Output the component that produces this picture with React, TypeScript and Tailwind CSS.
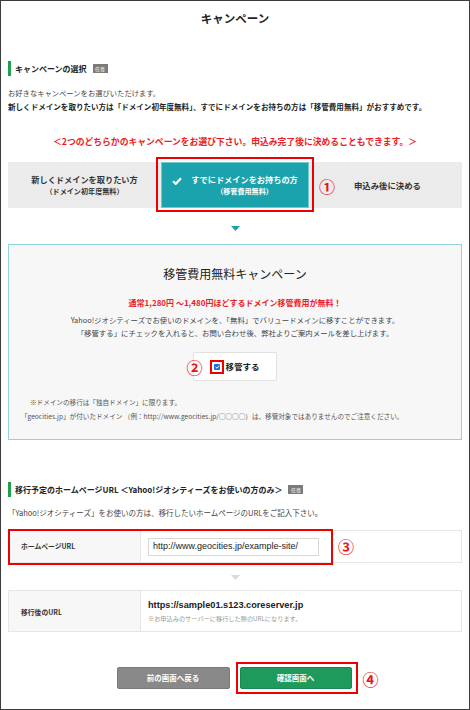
const jp = "font-['Noto_Sans_CJK_JP','Noto_Sans',sans-serif]";

function Badge() {
  return (
    <span className="ml-[6px] inline-flex h-[9px] w-[15px] items-center justify-center bg-[#7b7b7b] text-[5px] leading-none text-white">
      任意
    </span>
  );
}

function Heading({ children }: { children: React.ReactNode }) {
  return (
    <div className="flex h-[15px] items-center border-l-[3px] border-[#21a04a] pl-[4px]">
      <span className="text-[8px] font-bold leading-none text-[#222]">{children}</span>
      <Badge />
    </div>
  );
}

function Circled({ n, className }: { n: string; className: string }) {
  return (
    <span className={`absolute text-[16px] font-bold leading-none text-[#e8141b] ${className}`}>{n}</span>
  );
}

function Triangle({ color }: { color: string }) {
  return (
    <div className="flex justify-center">
      <svg width="9" height="5" viewBox="0 0 9 5">
        <path d="M0 0 H9 L4.5 5 Z" fill={color} />
      </svg>
    </div>
  );
}

export default function App() {
  return (
    <div className={`${jp} h-[710px] w-[470px] overflow-hidden border border-[#3c3c3c] bg-white px-[7px] text-[#333]`}>
      {/* ページタイトル */}
      <h1 className="pt-[8px] text-center text-[11.5px] font-bold leading-[18px] text-[#222]">キャンペーン</h1>

      <div className="mt-[34px]">
        <Heading>キャンペーンの選択</Heading>
      </div>

      <div className="mt-[10px] leading-[14px]">
        <p className="text-[7.3px] text-[#444]">お好きなキャンペーンをお選びいただけます。</p>
        <p className="text-[7.55px] font-bold text-[#222]">
          新しくドメインを取りたい方は「ドメイン初年度無料」、すでにドメインをお持ちの方は「移管費用無料」がおすすめです。
        </p>
      </div>

      <p className="mt-[21px] text-center text-[8.8px] font-bold leading-[14px] text-[#ee1c24]">
        ＜2つのどちらかのキャンペーンをお選び下さい。申込み完了後に決めることもできます。＞
      </p>

      {/* キャンペーン選択タブ */}
      <div className="mt-[13px] grid h-[46px] grid-cols-[153px_148px_1fr] bg-[#ebebeb]">
        <div className="flex flex-col items-center justify-center gap-[1px] text-[#333]">
          <span className="text-[8.2px] font-bold leading-[11px]">新しくドメインを取りたい方</span>
          <span className="text-[7.1px] font-bold leading-[10px]">（ドメイン初年度無料）</span>
        </div>
        <div className="relative">
          <div className="flex h-full items-center justify-center gap-[9px] border border-[#74c9ce] bg-[#1aa3ac] text-white">
            <svg width="10" height="8" viewBox="0 0 10 8" className="mt-[-8px]">
              <path d="M1 4.2 L3.8 6.8 L9 1.2" fill="none" stroke="white" strokeWidth="2.2" />
            </svg>
            <div className="flex flex-col items-center gap-[1px]">
              <span className="text-[8.2px] font-bold leading-[11px]">すでにドメインをお持ちの方</span>
              <span className="text-[7.1px] font-bold leading-[10px]">（移管費用無料）</span>
            </div>
          </div>
          <div className="pointer-events-none absolute bottom-[-4px] left-[-5px] right-[-5px] top-[-5px] border-2 border-[#ee0000]" />
          <Circled n="①" className="left-[158px] top-[16px]" />
        </div>
        <div className="flex items-center justify-center pl-[4px]">
          <span className="text-[8.4px] font-bold text-[#333]">申込み後に決める</span>
        </div>
      </div>

      <div className="mt-[18px]">
        <Triangle color="#1aa3ac" />
      </div>

      {/* 移管費用無料キャンペーン */}
      <div className="mt-[13px] border border-[#93d4db] bg-[#f7f7f7] pb-[16px]">
        <h2 className="pt-[20px] text-center text-[12px] leading-[18px] text-[#222]">移管費用無料キャンペーン</h2>
        <p className="mt-[14px] text-center text-[8px] font-bold leading-[12px] text-[#ee1c24]">
          通常1,280円 〜1,480円ほどするドメイン移管費用が無料！
        </p>
        <div className="mt-[4px] text-center text-[7.4px] leading-[13px] text-[#444]">
          <p>Yahoo!ジオシティーズでお使いのドメインを、「無料」でバリュードメインに移すことができます。</p>
          <p>「移管する」にチェックを入れると、お問い合わせ後、弊社よりご案内メールを差し上げます。</p>
        </div>
        <div className="mt-[13px] flex justify-center">
          <div className="flex h-[29px] w-[84px] items-center justify-center rounded-[2px] border border-[#e2e2e2] bg-white">
            <div className="relative flex items-center">
              <span className="flex h-[14px] w-[14px] items-center justify-center border-2 border-[#ee0000]">
                <span className="flex h-[6px] w-[6px] items-center justify-center rounded-[1px] bg-[#1f6fe0]">
                  <svg width="5" height="4" viewBox="0 0 5 4">
                    <path d="M0.6 2 L2 3.2 L4.4 0.7" fill="none" stroke="white" strokeWidth="1" />
                  </svg>
                </span>
              </span>
              <span className="ml-[1px] text-[8.5px] font-bold leading-none text-[#222]">移管する</span>
              <Circled n="②" className="left-[-24px] top-[-1px]" />
            </div>
          </div>
        </div>
        <div className="mt-[14px] text-[6.6px] leading-[14px] text-[#555]">
          <p className="pl-[21px]">※ドメインの移行は「独自ドメイン」に限ります。</p>
          <p className="pl-[12px]">
            「geocities.jp」が付いたドメイン （例：http://www.geocities.jp/○○○○）は、移管対象ではありませんのでご注意ください。
          </p>
        </div>
      </div>

      <div className="mt-[42px]">
        <Heading>移行予定のホームページURL ＜Yahoo!ジオシティーズをお使いの方のみ＞</Heading>
      </div>

      <p className="mt-[10px] text-[7.5px] leading-[12px] text-[#444]">
        「Yahoo!ジオシティーズ」をお使いの方は、移行したいホームページのURLをご記入下さい。
      </p>

      {/* URL入力 */}
      <div className="relative mt-[11px] flex h-[33px] border border-[#e6e6e6]">
        <div className="flex w-[132px] items-center border-r border-[#e6e6e6] bg-[#f7f7f7] pl-[12px]">
          <span className="text-[6.8px] font-bold text-[#333]">ホームページURL</span>
        </div>
        <div className="flex items-center pl-[7px]">
          <div className="flex h-[18px] w-[171px] items-center border border-[#d8d8d8] bg-white pl-[4px] font-['Liberation_Sans',Arial,sans-serif] text-[9px] text-[#222]">
            http://www.geocities.jp/example-site/
          </div>
        </div>
        <div className="pointer-events-none absolute left-[-1px] top-[-2px] h-[36px] w-[325px] border-2 border-[#ee0000]" />
        <Circled n="③" className="left-[329px] top-[7px]" />
      </div>

      <div className="mt-[12px]">
        <Triangle color="#d9d9d9" />
      </div>

      <div className="mt-[10px] flex h-[42px] border border-[#e6e6e6]">
        <div className="flex w-[132px] items-center border-r border-[#e6e6e6] bg-[#f7f7f7] pl-[12px]">
          <span className="mt-[3px] text-[6.8px] font-bold text-[#333]">移行後のURL</span>
        </div>
        <div className="flex flex-col justify-center pl-[7px]">
          <span className="font-['Liberation_Sans',Arial,sans-serif] text-[9.2px] font-bold leading-[13px] text-[#222]">
            https://sample01.s123.coreserver.jp
          </span>
          <span className="mt-[2px] text-[6.2px] leading-[9px] text-[#999]">※お申込みのサーバーに移行した際のURLになります。</span>
        </div>
      </div>

      {/* ボタン */}
      <div className="mt-[35px] flex justify-center gap-[10px] pr-[2px]">
        <button className="flex h-[22px] w-[113px] items-center justify-center rounded-[2px] border border-[#7a7a7a] bg-[#898989] text-[7.5px] font-bold text-white">
          前の画面へ戻る
        </button>
        <div className="relative">
          <button className="flex h-[22px] w-[112px] items-center justify-center rounded-[2px] border border-[#17884f] bg-[#1e9a5d] text-[7.5px] font-bold text-white">
            確認画面へ
          </button>
          <div className="pointer-events-none absolute bottom-[-5px] left-[-4px] right-[-6px] top-[-5px] border-2 border-[#ee0000]" />
          <Circled n="④" className="left-[123px] top-[4px]" />
        </div>
      </div>
    </div>
  );
}
